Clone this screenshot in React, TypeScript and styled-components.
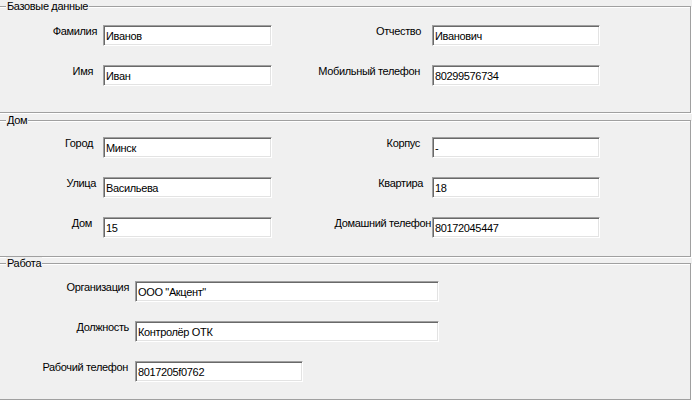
import React from "react";
import styled, { createGlobalStyle } from "styled-components";

const GlobalStyle = createGlobalStyle`
  html, body {
    margin: 0;
    padding: 0;
    background: #f0f0f0;
    overflow: hidden;
  }
  body {
    font-family: "Liberation Sans", Arial, sans-serif;
    font-size: 11px;
    letter-spacing: -0.35px;
    color: #000;
  }
`;

const Form = styled.div`
  width: 692px;
  height: 401px;
  display: flex;
  flex-direction: column;
  padding-top: 6px;
  box-sizing: border-box;
  overflow: hidden;
`;

const Group = styled.section<{ $height: number; $top: number }>`
  position: relative;
  box-sizing: border-box;
  margin-left: -2px;
  margin-top: ${(p) => p.$top}px;
  width: 693px;
  height: ${(p) => p.$height}px;
  border: 1px solid #a0a0a0;
  box-shadow: inset 1px 1px 0 #ffffff, 1px 1px 0 #ffffff;
  flex-shrink: 0;
`;

const Title = styled.span`
  position: absolute;
  top: -7px;
  left: 7px;
  padding: 0 1px;
  line-height: 13px;
  background: #f0f0f0;
  white-space: nowrap;
`;

const Body = styled.div<{ $pad: number }>`
  display: flex;
  flex-direction: column;
  gap: 19px;
  padding: ${(p) => p.$pad}px 0 0 1px;
`;

const Row = styled.div`
  display: flex;
  align-items: flex-start;
  height: 21px;
`;

const Field = styled.div`
  display: flex;
  align-items: flex-start;
`;

const Label = styled.label<{ $width: number; $gap: number }>`
  width: ${(p) => p.$width}px;
  margin-right: ${(p) => p.$gap}px;
  text-align: right;
  line-height: 13px;
  white-space: nowrap;
`;

const TextBox = styled.input<{ $width: number }>`
  box-sizing: border-box;
  width: ${(p) => p.$width}px;
  height: 21px;
  margin: 0;
  padding: 0 2px;
  font-family: inherit;
  font-size: 11px;
  letter-spacing: inherit;
  color: #000;
  background: #ffffff;
  border-style: solid;
  border-width: 1px;
  border-color: #a0a0a0 #ffffff #ffffff #a0a0a0;
  box-shadow: inset 1px 1px 0 #696969, inset -1px -1px 0 #e3e3e3;
  outline: none;
`;

type FieldProps = {
  label: string;
  value: string;
  labelWidth: number;
  gap: number;
  width: number;
};

const LabeledBox = ({ label, value, labelWidth, gap, width }: FieldProps) => (
  <Field>
    <Label $width={labelWidth} $gap={gap}>
      {label}
    </Label>
    <TextBox $width={width} value={value} readOnly />
  </Field>
);

export default function App() {
  return (
    <>
      <GlobalStyle />
      <Form>
        <Group $height={107} $top={0}>
          <Title>Базовые данные</Title>
          <Body $pad={18}>
            <Row>
              <LabeledBox label="Фамилия" value="Иванов" labelWidth={97} gap={6} width={169} />
              <LabeledBox label="Отчество" value="Иванович" labelWidth={149} gap={11} width={168} />
            </Row>
            <Row>
              <LabeledBox label="Имя" value="Иван" labelWidth={93} gap={10} width={169} />
              <LabeledBox label="Мобильный телефон" value="80299576734" labelWidth={148} gap={12} width={168} />
            </Row>
          </Body>
        </Group>

        <Group $height={137} $top={7}>
          <Title>Дом</Title>
          <Body $pad={16}>
            <Row>
              <LabeledBox label="Город" value="Минск" labelWidth={93} gap={10} width={169} />
              <LabeledBox label="Корпус" value="-" labelWidth={148} gap={12} width={168} />
            </Row>
            <Row>
              <LabeledBox label="Улица" value="Васильева" labelWidth={96} gap={7} width={169} />
              <LabeledBox label="Квартира" value="18" labelWidth={151} gap={9} width={168} />
            </Row>
            <Row>
              <LabeledBox label="Дом" value="15" labelWidth={92} gap={11} width={169} />
              <LabeledBox label="Домашний телефон" value="80172045447" labelWidth={159} gap={1} width={168} />
            </Row>
          </Body>
        </Group>

        <Group $height={137} $top={6}>
          <Title>Работа</Title>
          <Body $pad={17}>
            <Row>
              <LabeledBox label="Организация" value={'ООО "Акцент"'} labelWidth={129} gap={6} width={304} />
            </Row>
            <Row>
              <LabeledBox label="Должность" value="Контролёр ОТК" labelWidth={129} gap={6} width={304} />
            </Row>
            <Row>
              <LabeledBox label="Рабочий телефон" value="8017205f0762" labelWidth={128} gap={7} width={168} />
            </Row>
          </Body>
        </Group>
      </Form>
    </>
  );
}
